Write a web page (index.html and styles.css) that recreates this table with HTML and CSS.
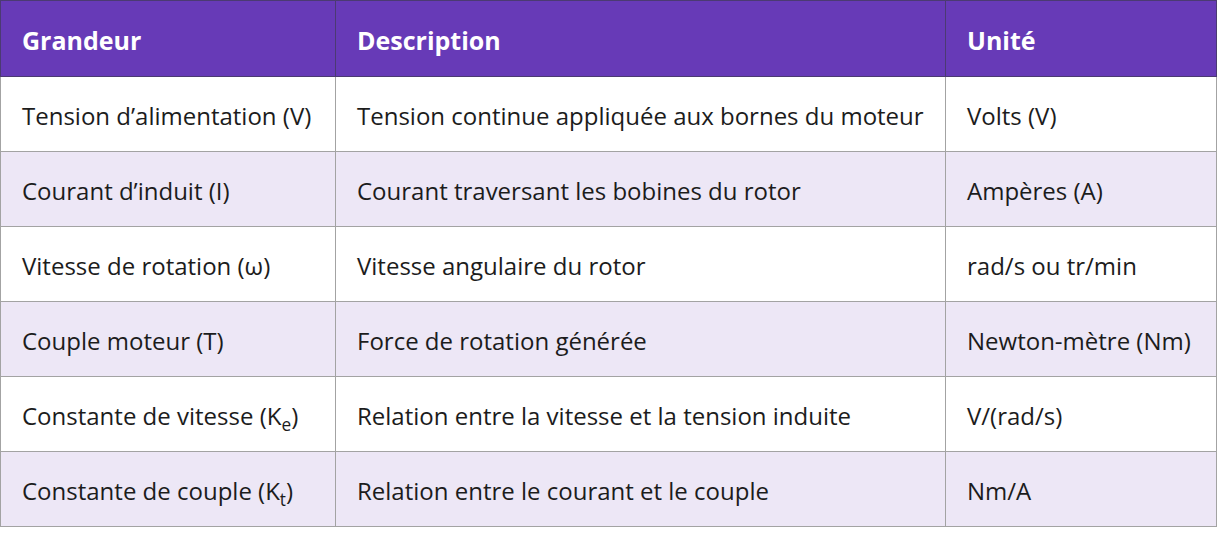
FILE: index.html
```html
<!DOCTYPE html>
<html lang="fr">
<head>
<meta charset="utf-8">
<title>Grandeurs</title>
<link rel="stylesheet" href="styles.css">
</head>
<body>
<table class="grid">
  <colgroup>
    <col class="c1"><col class="c2"><col class="c3">
  </colgroup>
  <thead>
    <tr><th>Grandeur</th><th>Description</th><th>Unité</th></tr>
  </thead>
  <tbody>
    <tr><td>Tension d’alimentation (V)</td><td>Tension continue appliquée aux bornes du moteur</td><td>Volts (V)</td></tr>
    <tr><td>Courant d’induit (I)</td><td>Courant traversant les bobines du rotor</td><td>Ampères (A)</td></tr>
    <tr><td>Vitesse de rotation (ω)</td><td>Vitesse angulaire du rotor</td><td>rad/s ou tr/min</td></tr>
    <tr><td>Couple moteur (T)</td><td>Force de rotation générée</td><td>Newton-mètre (Nm)</td></tr>
    <tr><td>Constante de vitesse (K<sub>e</sub>)</td><td>Relation entre la vitesse et la tension induite</td><td>V/(rad/s)</td></tr>
    <tr><td>Constante de couple (K<sub>t</sub>)</td><td>Relation entre le courant et le couple</td><td>Nm/A</td></tr>
  </tbody>
</table>
</body>
</html>
```
FILE: styles.css
```css
html, body {
  margin: 0;
  padding: 0;
  background: #ffffff;
}
body {
  font-family: "Open Sans", "Noto Sans", sans-serif;
  color: #1c1c1c;
}
.grid {
  width: 1216px;
  border-collapse: collapse;
  table-layout: fixed;
  font-size: 24px;
}
.c1 { width: 335px; }
.c2 { width: 610px; }
.c3 { width: 271px; }
.grid th,
.grid td {
  text-align: left;
  padding: 3px 8px 0 21px;
  height: 71px;
  border: 1px solid #a3a3a3;
  vertical-align: middle;
  white-space: nowrap;
}
.grid th {
  background: #673ab7;
  color: #ffffff;
  font-weight: 700;
  font-size: 25px;
  height: 72px;
  border-color: #4b3a72;
}
.grid tbody tr:nth-child(even) td {
  background: #ede7f6;
}
.grid sub {
  font-size: 0.72em;
  line-height: 0;
}
```
